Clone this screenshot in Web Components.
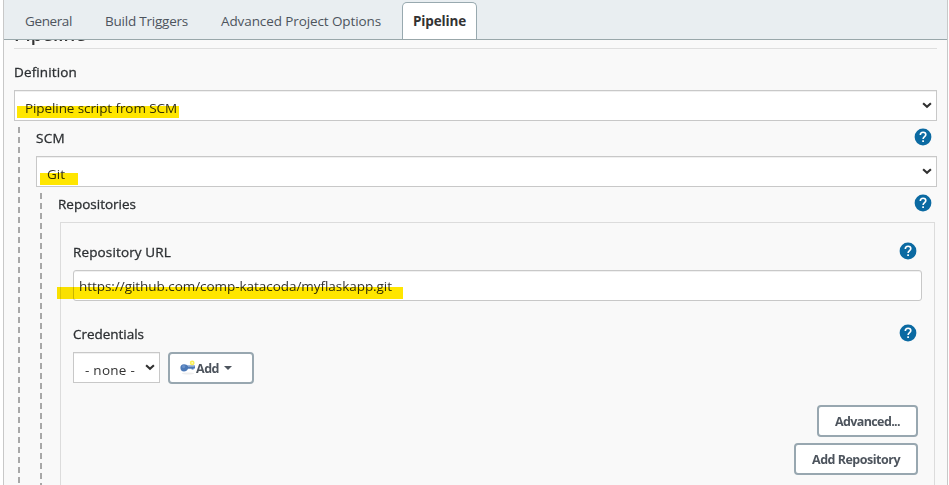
<!DOCTYPE html>
<html lang="en">
<head>
<meta charset="utf-8">
<title>Pipeline configuration</title>
<style>
html,body{margin:0;height:485px;overflow:hidden;background:#fff}
body{font-family:"Open Sans","Noto Sans",sans-serif;font-size:13.5px;color:#333}
</style>
</head>
<body>
<config-page></config-page>
<script>
const define = (name, html, setup) => {
  const t = document.createElement('template');
  t.innerHTML = html;
  customElements.define(name, class extends HTMLElement {
    constructor() {
      super();
      this.attachShadow({mode: 'open'}).append(t.content.cloneNode(true));
    }
    connectedCallback() { if (setup) setup(this, this.shadowRoot); }
  });
};

/* One line of text, tracked so that it fills the width in its "w" attribute. */
define('fit-text', `<style>:host{display:inline-block;white-space:pre;line-height:20px}span{display:inline-block}</style><span><slot></slot></span>`,
  (el, root) => {
    const span = root.querySelector('span'), w = +el.getAttribute('w');
    el.style.width = w + 'px';
    const now = span.getBoundingClientRect().width;
    span.style.letterSpacing = ((w - now) / el.textContent.length) + 'px';
  });

define('help-icon', `<style>:host{display:block;width:18px;height:18px}svg{display:block}</style>
<svg width="18" height="18" viewBox="0 0 18 18"><circle cx="9" cy="9" r="8.4" fill="#0b6aa2"/>
<path d="M6.3 7.1C6.3 5.3 7.4 4.2 9.1 4.2S11.8 5.2 11.8 6.7C11.8 8.6 9.1 8.8 9.1 11" fill="none" stroke="#fff" stroke-width="1.6"/><rect x="8.25" y="12.3" width="1.7" height="1.7" fill="#fff"/></svg>`);

define('tab-item', `<style>
:host{display:flex;box-sizing:border-box;height:37px;padding:9px 0 0;color:#4d545d}
:host([active]){width:75px;height:37px;padding:8px 0 0 10px;background:#fff;border:1px solid #98a9af;border-bottom:0;border-radius:5px 5px 0 0;color:#333;font-weight:700}
</style><slot></slot>`);

define('tab-bar', `<style>
:host{display:flex;align-items:flex-end;box-sizing:border-box;height:40px;padding-left:21px;background:#e9eef1;border-bottom:1px solid #99a7aa;position:relative;z-index:1}
tab-item + tab-item{margin-left:33px}
tab-item + tab-item[active]{margin-left:21px}
</style>
<tab-item><fit-text w="47">General</fit-text></tab-item>
<tab-item><fit-text w="83">Build Triggers</fit-text></tab-item>
<tab-item><fit-text w="160">Advanced Project Options</fit-text></tab-item>
<tab-item active><fit-text w="53">Pipeline</fit-text></tab-item>`);

define('field-label', `<style>
:host{display:flex;justify-content:space-between;height:35px;box-sizing:border-box;padding-top:7px;color:#2d3033;-webkit-text-stroke:.3px #2d3033}
help-icon{-webkit-text-stroke:0;margin-right:5px}
</style><slot></slot>`, (el, root) => {
  if (el.hasAttribute('help')) root.append(document.createElement('help-icon'));
});

define('select-box', `<style>
:host{display:flex;justify-content:space-between;box-sizing:border-box;height:31px;padding:7px 4px 0 10px;border:1px solid #c8c8c8;background:#fff;box-shadow:inset 0 1px 0 #f0f0f0}
svg{display:block;margin-top:4px}
</style><slot></slot><svg width="10" height="7" viewBox="0 0 10 7"><path d="M1.1 1.2 5 4.8 8.9 1.2" fill="none" stroke="#303030" stroke-width="2.1"/></svg>`);

define('text-input', `<style>
:host{display:flex;box-sizing:border-box;height:31px;padding:5px 5px 0;border:1px solid #c8c8c8;border-radius:3px;background:#fff;box-shadow:inset 0 1px 0 #f0f0f0}
</style><slot></slot>`);

define('marked-text', `<style>
:host{display:block;position:relative;height:20px}
i{position:absolute;left:var(--x);top:var(--y);width:var(--w);height:12px;background:#ffe600;mix-blend-mode:multiply}
</style><slot></slot><i></i>`);

define('push-button', `<style>
:host{display:flex;align-items:center;box-sizing:border-box;height:32px;padding:2px 16px 0;border:2px solid #98a7b0;border-radius:4px;background:#fff;color:#4d545d;font-weight:700;font-size:12.5px}
</style><slot></slot>`);

define('key-icon', `<style>:host{display:block;width:16px;height:16px}svg{display:block}</style>
<svg width="16" height="16" viewBox="0 0 16 16">
<ellipse cx="8" cy="13.5" rx="6" ry="1" fill="#eeeeee"/>
<path d="M4 4.2C6.1 4.2 7.1 5 7.8 5.6H15V8.6H13.6V9.6H11.6V8.8H8C7.2 10.6 6 11.4 4 11.4A3.6 3.6 0 0 1 4 4.2Z" fill="#4c79b7"/>
<circle cx="3.6" cy="6.6" r="1.6" fill="#6a92cb"/><path d="M8 6.5H14.5" stroke="#86a4cc"/>
<circle cx="12.2" cy="2.9" r="2.4" fill="#f9ef55"/><circle cx="12.2" cy="2.9" r=".8" fill="#fffbd0"/></svg>`);

define('nested-block', `<style>
:host{display:block;box-sizing:border-box;margin:6px 0 0 4px;padding-left:18px;
background:repeating-linear-gradient(#a8a8a8 0 6px,transparent 6px 10px) left top/2px 100% no-repeat}
.in{margin-top:-6px}
:host::before{content:"";display:table}
</style><div class="in"><slot></slot></div>`);

define('repo-panel', `<style>
:host{display:block;box-sizing:border-box;height:300px;margin:0 2px 0 2px;padding:12px 12px 0;border:1px solid #dcdcdc}
.cred{margin-top:16px}
.row{display:flex;gap:8px}
.actions{display:flex;flex-direction:column;align-items:flex-end;gap:6px;margin:21px 4px 0 0}
.small{width:87px;padding-left:11px}
.add{width:86px;padding-left:10px}
.add key-icon{margin-top:-2px}
.add svg{margin:-2px 0 0 5px}
</style>
<field-label help><fit-text w="98">Repository URL</fit-text></field-label>
<text-input><marked-text style="--x:-22px;--y:11px;--w:346px"><fit-text w="313">https://github.com/comp-katacoda/myflaskapp.git</fit-text></marked-text></text-input>
<field-label help class="cred"><fit-text w="71">Credentials</fit-text></field-label>
<div class="row"><select-box class="small"><fit-text w="50">- none -</fit-text></select-box>
<push-button class="add"><key-icon></key-icon><fit-text w="23">Add</fit-text><svg width="8" height="5"><path d="M0 0H8L4 4Z" fill="#4d545d"/></svg></push-button></div>
<div class="actions">
<push-button><fit-text w="65">Advanced...</fit-text></push-button>
<push-button><fit-text w="88">Add Repository</fit-text></push-button></div>`);

define('config-page', `<style>
:host{display:block;box-sizing:border-box;height:485px;margin:0 1px 0 3px;border:solid #c8c8c8;border-width:0 1px;background:#f9f9f9;overflow:hidden}
main{display:block;padding:0 10px}
h2{margin:-19px 0 0;height:27px;border-bottom:1px solid #dedede;font-size:18.5px;font-weight:600}
.first{height:41px;padding-top:13px}
</style>
<tab-bar></tab-bar>
<main>
<h2><fit-text w="72">Pipeline</fit-text></h2>
<field-label class="first"><fit-text w="63">Definition</fit-text></field-label>
<select-box><marked-text style="--x:-8px;--y:8px;--w:162px"><fit-text w="152">Pipeline script from SCM</fit-text></marked-text></select-box>
<nested-block>
<field-label help><fit-text w="29">SCM</fit-text></field-label>
<select-box><marked-text style="--x:-7px;--y:9px;--w:38px"><fit-text w="18">Git</fit-text></marked-text></select-box>
<nested-block>
<field-label help><fit-text w="78">Repositories</fit-text></field-label>
<repo-panel></repo-panel>
</nested-block>
</nested-block>
</main>`);
</script>
</body>
</html>
